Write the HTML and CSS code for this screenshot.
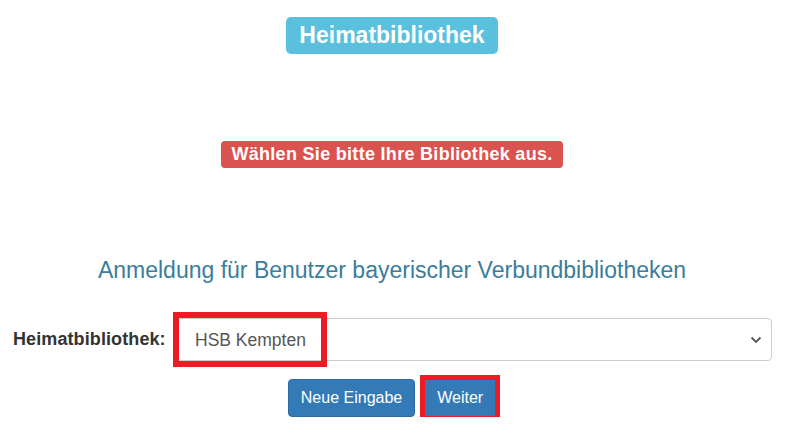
FILE: index.html
```html
<!DOCTYPE html>
<html lang="de">
<head>
    <meta charset="UTF-8">
    <meta name="viewport" content="width=device-width, initial-scale=1.0">
    <title>Heimatbibliothek</title>
    <link rel="stylesheet" href="styles.css">
</head>
<body>
    <div class="page">
        <div class="top">
            <span class="badge-info">Heimatbibliothek</span>
        </div>

        <div class="notice">
            <span class="badge-danger">Wählen Sie bitte Ihre Bibliothek aus.</span>
        </div>

        <h2 class="title">Anmeldung für Benutzer bayerischer Verbundbibliotheken</h2>

        <div class="form-row">
            <label for="library">Heimatbibliothek:</label>
            <div class="select-wrap">
                <select id="library">
                    <option>HSB Kempten</option>
                </select>
                <span class="mark mark-select"></span>
            </div>
        </div>

        <div class="buttons">
            <button class="btn">Neue Eingabe</button>
            <button class="btn btn-marked">Weiter</button>
        </div>
    </div>
</body>
</html>
```

FILE: styles.css
```css
body {
    margin: 0;
    font-family: "Liberation Sans", Arial, sans-serif;
    color: #333;
    background: #fff;
}
.page {
    width: 784px;
    padding-top: 17px;
}
.top, .notice, .buttons {
    display: flex;
    justify-content: center;
}
.badge-info {
    background-color: #5bc0de;
    color: #fff;
    font-weight: bold;
    font-size: 23px;
    line-height: 37px;
    padding: 0 13px;
    border-radius: 5px;
}
.notice {
    margin-top: 87px;
}
.badge-danger {
    background-color: #d9534f;
    color: #fff;
    font-weight: bold;
    font-size: 18px;
    line-height: 27px;
    padding: 0 10px;
    border-radius: 4px;
    letter-spacing: 0.3px;
}
.title {
    margin: 87px 0 0;
    text-align: center;
    font-weight: normal;
    font-size: 23px;
    line-height: 30px;
    color: #3a7d9c;
}
.form-row {
    display: flex;
    align-items: center;
    margin-top: 33px;
    padding: 0 12px 0 13px;
}
label {
    font-weight: bold;
    font-size: 18px;
    letter-spacing: 0.1px;
    width: 163px;
    color: #333;
}
.select-wrap {
    position: relative;
    flex: 1;
}
select {
    display: block;
    width: 100%;
    height: 43px;
    padding: 0 18px;
    font-family: inherit;
    font-size: 17.5px;
    color: #555;
    background: #fff;
    border: 1px solid #ccc;
    border-radius: 4px;
    appearance: none;
    background-image: url("data:image/svg+xml,%3Csvg xmlns='http://www.w3.org/2000/svg' width='12' height='8' viewBox='0 0 12 8'%3E%3Cpath d='M1.5 1.5 6 6l4.5-4.5' fill='none' stroke='%23555' stroke-width='1.8'/%3E%3C/svg%3E");
    background-repeat: no-repeat;
    background-position: right 9px center;
}
.mark {
    position: absolute;
    border: 6px solid #ed1c24;
}
.mark-select {
    left: -3px;
    top: -6px;
    width: 142px;
    height: 43px;
}
.buttons {
    margin-top: 18px;
    gap: 9px;
}
.btn {
    background-color: #337ab7;
    border: 1px solid #2e6da4;
    color: #fff;
    font-family: inherit;
    font-size: 16px;
    height: 38px;
    padding: 0 12px;
    border-radius: 4px;
}
.btn-marked {
    outline: 5px solid #ed1c24;
    outline-offset: -1px;
    border-radius: 0;
}
```
